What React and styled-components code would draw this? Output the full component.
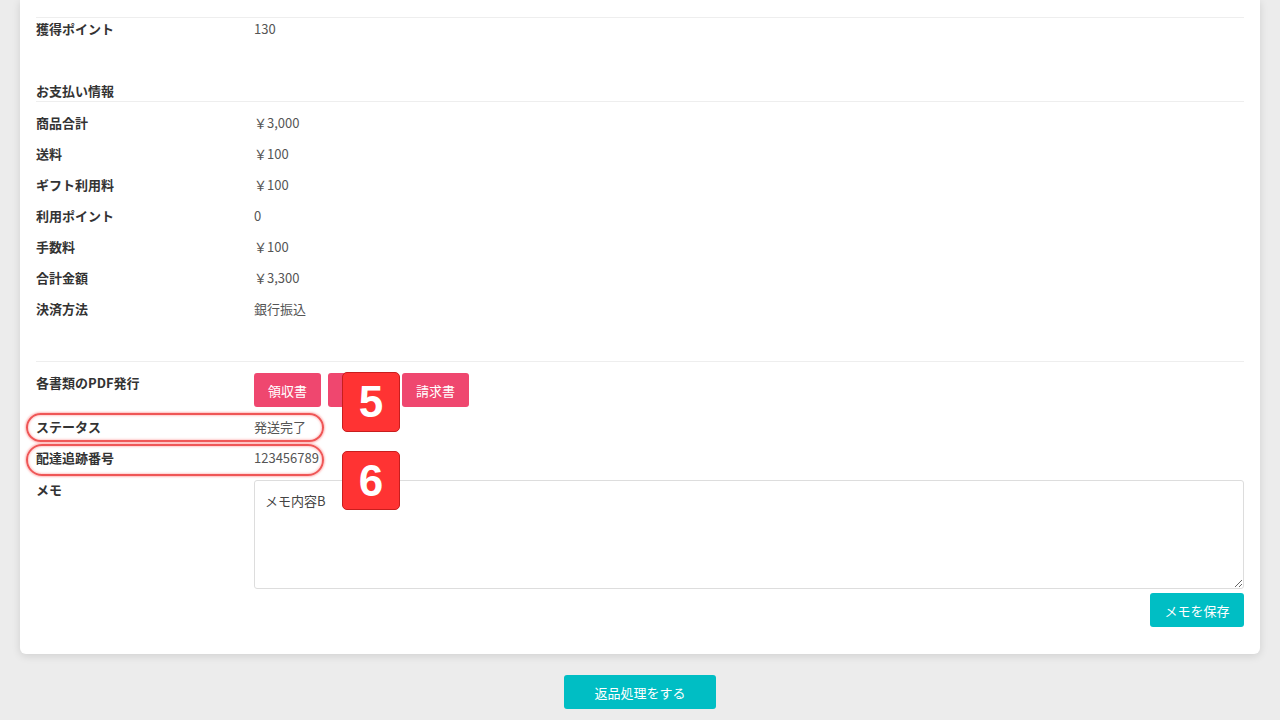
import React from 'react';
import styled, { createGlobalStyle } from 'styled-components';

const GlobalStyle = createGlobalStyle`
  body {
    margin: 0;
    background: #ececec;
    font-family: "Noto Sans CJK JP", "Noto Sans", sans-serif;
    color: #333;
  }
`;

const Page = styled.div`
  padding: 0 20px 11px;
`;

const Card = styled.div`
  position: relative;
  background: #fff;
  border-radius: 0 0 6px 6px;
  box-shadow: 0 2px 8px rgba(0, 0, 0, 0.12);
  padding: 17px 16px 27px;
`;

const Row = styled.div`
  display: flex;
  align-items: ${(p) => (p.top ? 'flex-start' : 'center')};
  height: ${(p) => p.h || 'auto'};
  margin-top: ${(p) => p.mt || '0'};
  border-top: ${(p) => (p.line ? '1px solid #eeeeee' : 'none')};
  font-size: 13px;
  line-height: 20px;
`;

const Label = styled.div`
  width: 218px;
  flex-shrink: 0;
  font-weight: bold;
  color: #333;
`;

const Value = styled.div`
  color: #555;
`;

const Heading = styled.div`
  margin-top: 41px;
  font-size: 13px;
  line-height: 20px;
  font-weight: bold;
  border-bottom: 1px solid #eeeeee;
`;

const Table = styled.div`
  padding-top: 5px;
`;

const Divider = styled.div`
  margin-top: 37px;
  border-top: 1px solid #eeeeee;
`;

const Buttons = styled.div`
  display: flex;
  gap: 7px;
`;

const PinkButton = styled.button`
  width: 67px;
  height: 34px;
  border: none;
  border-radius: 3px;
  background: #ef476f;
  color: #fff;
  font-family: inherit;
  font-size: 13px;
  padding: 0;
`;

const Memo = styled.textarea`
  flex: 1;
  height: 109px;
  box-sizing: border-box;
  border: 1px solid #dddddd;
  border-radius: 3px;
  padding: 10px;
  font-family: inherit;
  font-size: 13px;
  line-height: 20px;
  color: #444;
  outline: none;
`;

const SaveRow = styled.div`
  display: flex;
  justify-content: flex-end;
  margin-top: 4px;
`;

const TealButton = styled.button`
  width: ${(p) => p.w};
  height: 34px;
  border: none;
  border-radius: 3px;
  background: #00bec4;
  color: #fff;
  font-family: inherit;
  font-size: 13px;
  padding: 0;
`;

const Footer = styled.div`
  display: flex;
  justify-content: center;
  margin-top: 21px;
`;

const Ring = styled.div`
  position: absolute;
  left: 6px;
  top: ${(p) => p.top}px;
  width: 298px;
  height: ${(p) => p.h}px;
  box-sizing: border-box;
  border: 2px solid #ef5656;
  border-radius: 16px;
  box-shadow: 0 0 2px 1px rgba(255, 160, 160, 0.7), inset 0 0 2px 1px rgba(255, 170, 170, 0.6);
  pointer-events: none;
`;

const Badge = styled.div`
  position: absolute;
  left: 322px;
  top: ${(p) => p.top}px;
  width: 58px;
  height: ${(p) => p.h}px;
  box-sizing: border-box;
  background: #ff3333;
  border: 1px solid #c81e1e;
  border-radius: 5px;
  display: flex;
  align-items: center;
  justify-content: center;
  color: #fff;
  font-family: "Liberation Sans", Arial, sans-serif;
  font-weight: bold;
  font-size: 44px;
`;

const payments = [
  ['商品合計', '￥3,000'],
  ['送料', '￥100'],
  ['ギフト利用料', '￥100'],
  ['利用ポイント', '0'],
  ['手数料', '￥100'],
  ['合計金額', '￥3,300'],
  ['決済方法', '銀行振込'],
];

export default function App() {
  return (
    <Page>
      <GlobalStyle />
      <Card>
        <Row line h="22px">
          <Label>獲得ポイント</Label>
          <Value>130</Value>
        </Row>

        <Heading>お支払い情報</Heading>
        <Table>
          {payments.map(([label, value]) => (
            <Row key={label} h="31px">
              <Label>{label}</Label>
              <Value>{value}</Value>
            </Row>
          ))}
        </Table>

        <Divider />

        <Row top mt="11px">
          <Label>各書類のPDF発行</Label>
          <Buttons>
            <PinkButton>領収書</PinkButton>
            <PinkButton>納品書</PinkButton>
            <PinkButton>請求書</PinkButton>
          </Buttons>
        </Row>
        <Row h="31px" mt="4px">
          <Label>ステータス</Label>
          <Value>発送完了</Value>
        </Row>
        <Row h="32px">
          <Label>配達追跡番号</Label>
          <Value>123456789</Value>
        </Row>
        <Row top mt="6px">
          <Label>メモ</Label>
          <Memo readOnly value="メモ内容B" />
        </Row>
        <SaveRow>
          <TealButton w="94px">メモを保存</TealButton>
        </SaveRow>

        <Ring top={413} h={29} />
        <Ring top={444} h={32} />
        <Badge top={372} h={60}>5</Badge>
        <Badge top={451} h={59}>6</Badge>
      </Card>
      <Footer>
        <TealButton w="152px">返品処理をする</TealButton>
      </Footer>
    </Page>
  );
}
